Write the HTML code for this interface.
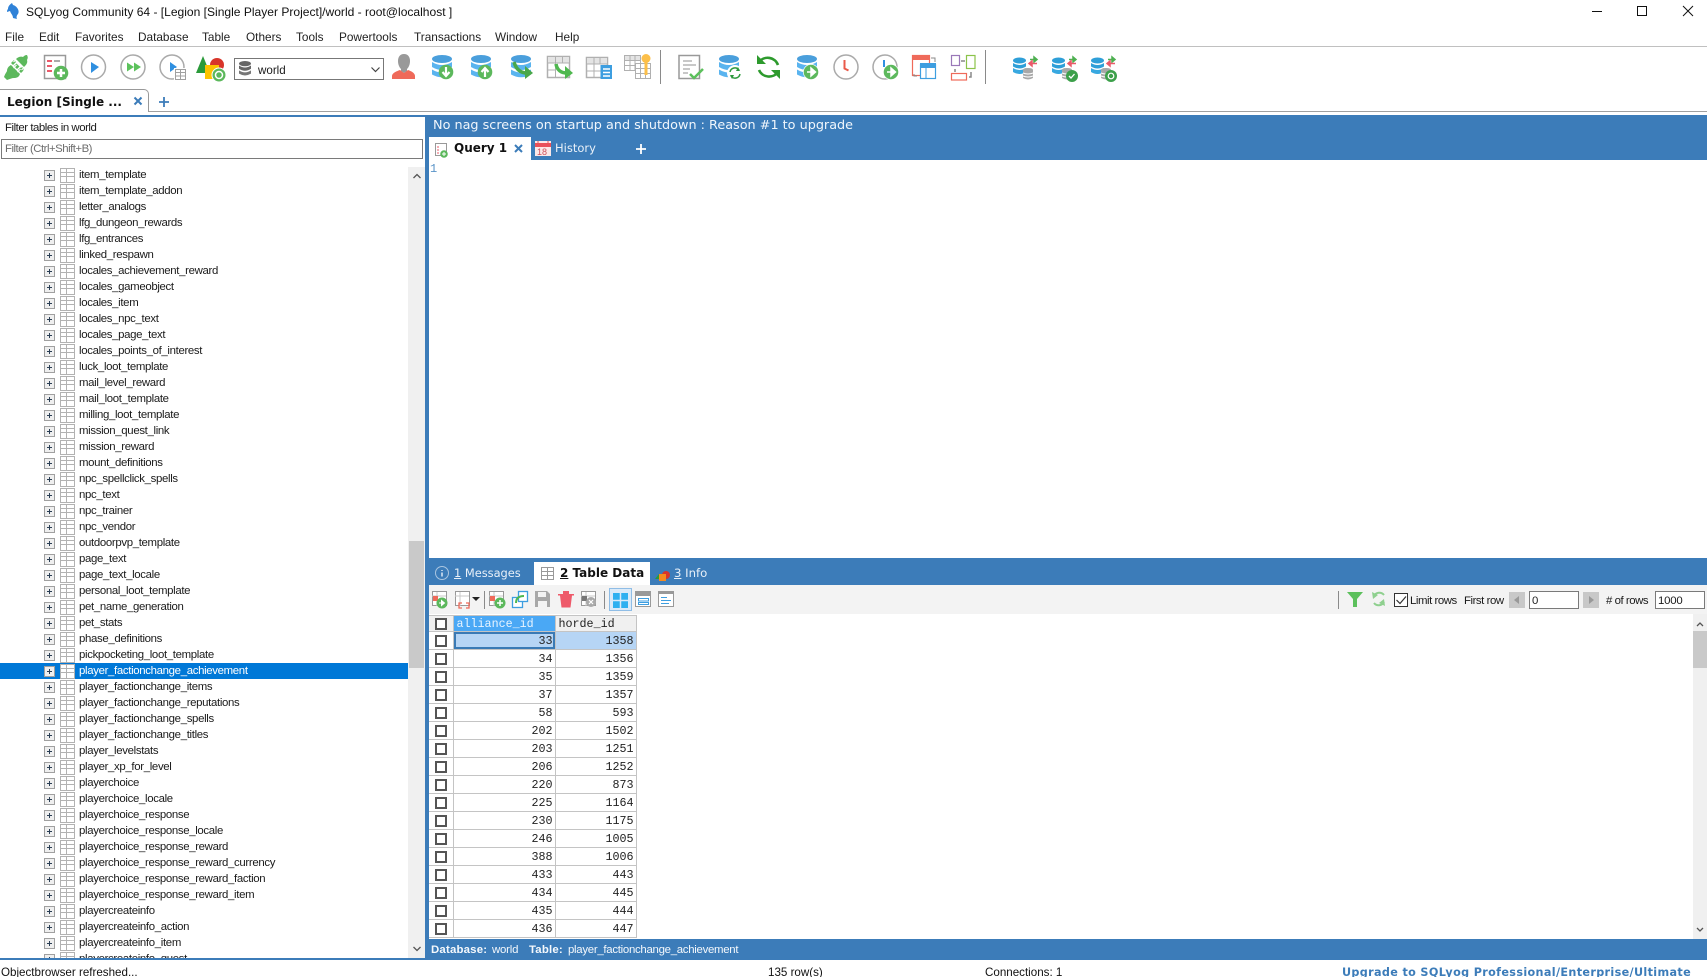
<!DOCTYPE html>
<html><head><meta charset="utf-8"><title>SQLyog</title>
<style>
*{box-sizing:border-box}
html,body{margin:0;padding:0;background:#fff;width:1707px;height:977px;overflow:hidden}
body{position:relative;font-family:"Liberation Sans",sans-serif;font-size:11.8px;color:#1a1a1a}
.a{position:absolute;white-space:nowrap;line-height:16px}
.b{position:absolute}
.v{font-family:"DejaVu Sans",sans-serif}
.n{font-size:11.4px;letter-spacing:-.45px;top:593px}
#tree{position:absolute;left:0;top:167px;width:408px;height:791px;overflow:hidden}
.r{position:relative;height:16px;line-height:17px;padding-left:79px;font-size:11.4px;letter-spacing:-.33px;white-space:nowrap;color:#1a1a1a}
.r:before{content:"";position:absolute;left:44px;top:3px;width:9px;height:9px;border:1px solid #a0a0a0;background:linear-gradient(#2b3f55,#2b3f55) center/5px 1px no-repeat,linear-gradient(#2b3f55,#2b3f55) center/1px 5px no-repeat,#efefef}
.r:after{content:"";position:absolute;left:60px;top:1px;width:13px;height:13px;border:1px solid #b2b2b2;background:linear-gradient(#b2b2b2,#b2b2b2) 0 3px/100% 1px no-repeat,linear-gradient(#b2b2b2,#b2b2b2) 0 7px/100% 1px no-repeat,linear-gradient(#b2b2b2,#b2b2b2) 5px 0/1px 100% no-repeat,#fff}
.r.s{background:#0078d7;color:#fff}
table{position:absolute;left:429px;top:615px;border-collapse:collapse;table-layout:fixed;width:207px;font-family:"Liberation Mono",monospace;font-size:11.7px}
td{height:18px;padding:1px 2px 0 0;text-align:right;border:1px solid #c4c4c4;border-left:0;line-height:14px;color:#222}
td:first-child{border-left:0;padding:0;position:relative}
td i{position:absolute;left:6px;top:3px;width:12px;height:12px;border:2px solid #555;background:#fff}
tr.h td{height:16px;background:#f0f0f0;text-align:left;padding:0 0 0 3px}
tr.h td.c{background:#4aa8f5;color:#e8f4ff}
tr.h td:first-child{background:#f0f0f0;padding:0}
tr.h td i{top:2px}
td.sel{background:#b6d5f5;box-shadow:inset 0 0 0 2px #3a7ab5}
td.sl{background:#b6d5f5}
.sb{position:absolute;background:#f0f0f0}
.th{position:absolute;background:#c9c9c9}
</style></head><body>

<!-- blue areas -->
<div class="b" style="left:0;top:115px;width:1707px;height:2px;background:#3c7cb9"></div>
<div class="b" style="left:425px;top:115px;width:1282px;height:45px;background:#3c7cb9"></div>
<div class="b" style="left:425px;top:115px;width:4px;height:845px;background:#3c7cb9"></div>
<div class="b" style="left:425px;top:558px;width:1282px;height:27px;background:#3c7cb9"></div>
<div class="b" style="left:429px;top:585px;width:1278px;height:29px;background:#f3f3f3"></div>
<div class="b" style="left:425px;top:939px;width:1282px;height:21px;background:#3c7cb9"></div>
<div class="b" style="left:0;top:958px;width:1707px;height:2px;background:#3c7cb9"></div>
<div class="b" style="left:0;top:46px;width:1707px;height:1px;background:#c0c0c0"></div>
<div class="b" style="left:0;top:111px;width:1707px;height:1px;background:#a0a0a0"></div>

<!-- title -->
<div class="a" style="left:26px;top:4px;font-size:12.05px;color:#111">SQLyog Community 64 - [Legion [Single Player Project]/world - root@localhost ]</div>

<!-- menu -->
<div class="a" style="left:5px;top:29px;color:#222">File</div>
<div class="a" style="left:39px;top:29px;color:#222">Edit</div>
<div class="a" style="left:75px;top:29px;color:#222">Favorites</div>
<div class="a" style="left:138px;top:29px;color:#222">Database</div>
<div class="a" style="left:202px;top:29px;color:#222">Table</div>
<div class="a" style="left:246px;top:29px;color:#222">Others</div>
<div class="a" style="left:296px;top:29px;color:#222">Tools</div>
<div class="a" style="left:339px;top:29px;color:#222">Powertools</div>
<div class="a" style="left:414px;top:29px;color:#222">Transactions</div>
<div class="a" style="left:495px;top:29px;color:#222">Window</div>
<div class="a" style="left:555px;top:29px;color:#222">Help</div>

<!-- combo -->
<div class="b" style="left:234px;top:58px;width:150px;height:22px;border:1px solid #777;background:#fff"></div>
<div class="a" style="left:258px;top:63px;font-size:11.6px">world</div>

<!-- connection tab -->
<div class="b" style="left:-2px;top:89px;width:151px;height:23px;border:1px solid #999;border-bottom:0;border-top-right-radius:5px;background:#fff"></div>
<div class="a v" style="left:7px;top:94px;font-size:12px;font-weight:bold;color:#111">Legion [Single ...</div>

<!-- left filter -->
<div class="a" style="left:5px;top:120px;font-size:11.4px;letter-spacing:-.45px">Filter tables in world</div>
<div class="b" style="left:1px;top:139px;width:422px;height:20px;border:1px solid #7a7a7a;background:#fff"></div>
<div class="a" style="left:5px;top:141px;font-size:11.4px;letter-spacing:-.5px;color:#6d6d6d">Filter (Ctrl+Shift+B)</div>

<!-- tree -->
<div id="tree">
<div class="r">item_template</div>
<div class="r">item_template_addon</div>
<div class="r">letter_analogs</div>
<div class="r">lfg_dungeon_rewards</div>
<div class="r">lfg_entrances</div>
<div class="r">linked_respawn</div>
<div class="r">locales_achievement_reward</div>
<div class="r">locales_gameobject</div>
<div class="r">locales_item</div>
<div class="r">locales_npc_text</div>
<div class="r">locales_page_text</div>
<div class="r">locales_points_of_interest</div>
<div class="r">luck_loot_template</div>
<div class="r">mail_level_reward</div>
<div class="r">mail_loot_template</div>
<div class="r">milling_loot_template</div>
<div class="r">mission_quest_link</div>
<div class="r">mission_reward</div>
<div class="r">mount_definitions</div>
<div class="r">npc_spellclick_spells</div>
<div class="r">npc_text</div>
<div class="r">npc_trainer</div>
<div class="r">npc_vendor</div>
<div class="r">outdoorpvp_template</div>
<div class="r">page_text</div>
<div class="r">page_text_locale</div>
<div class="r">personal_loot_template</div>
<div class="r">pet_name_generation</div>
<div class="r">pet_stats</div>
<div class="r">phase_definitions</div>
<div class="r">pickpocketing_loot_template</div>
<div class="r s">player_factionchange_achievement</div>
<div class="r">player_factionchange_items</div>
<div class="r">player_factionchange_reputations</div>
<div class="r">player_factionchange_spells</div>
<div class="r">player_factionchange_titles</div>
<div class="r">player_levelstats</div>
<div class="r">player_xp_for_level</div>
<div class="r">playerchoice</div>
<div class="r">playerchoice_locale</div>
<div class="r">playerchoice_response</div>
<div class="r">playerchoice_response_locale</div>
<div class="r">playerchoice_response_reward</div>
<div class="r">playerchoice_response_reward_currency</div>
<div class="r">playerchoice_response_reward_faction</div>
<div class="r">playerchoice_response_reward_item</div>
<div class="r">playercreateinfo</div>
<div class="r">playercreateinfo_action</div>
<div class="r">playercreateinfo_item</div>
<div class="r">playercreateinfo_quest</div>
</div>
<div class="sb" style="left:408px;top:167px;width:17px;height:791px"></div>
<div class="th" style="left:409px;top:541px;width:15px;height:127px"></div>

<!-- right banner -->
<div class="a v" style="left:433px;top:116px;font-size:12.8px;line-height:20px;color:#f0f6fc">No nag screens on startup and shutdown : Reason #1 to upgrade</div>
<div class="b" style="left:429px;top:137px;width:102px;height:23px;background:#fff"></div>
<div class="a v" style="left:454px;top:140px;font-size:12px;font-weight:bold;color:#111">Query 1</div>
<div class="a v" style="left:555px;top:140px;font-size:11.5px;color:#e8f0f8">History</div>
<div class="a" style="left:430px;top:161px;font-family:'Liberation Mono',monospace;font-size:12px;color:#5a94c8">1</div>

<!-- result tabs -->
<div class="b" style="left:534px;top:562px;width:116px;height:23px;background:#fff"></div>
<div class="a v" style="left:454px;top:565px;font-size:11.4px;color:#e8f0f8"><u>1</u> Messages</div>
<div class="a v" style="left:560px;top:565px;font-size:12px;font-weight:bold;color:#111"><u>2</u> Table Data</div>
<div class="a v" style="left:674px;top:565px;font-size:11.7px;color:#e8f0f8"><u>3</u> Info</div>

<!-- grid toolbar right -->
<div class="b" style="left:1394px;top:593px;width:14px;height:14px;border:1px solid #333;background:#fff"></div>
<div class="a n" style="left:1410px">Limit rows</div>
<div class="a n" style="left:1464px">First row</div>
<div class="b" style="left:1509px;top:592px;width:16px;height:16px;background:#c8c8c8"></div>
<div class="b" style="left:1529px;top:591px;width:50px;height:18px;border:1px solid #7a7a7a;background:#fff"></div>
<div class="a" style="left:1532px;top:593px;font-size:11.4px;color:#222">0</div>
<div class="b" style="left:1583px;top:592px;width:16px;height:16px;background:#c8c8c8"></div>
<div class="a n" style="left:1606px"># of rows</div>
<div class="b" style="left:1655px;top:591px;width:50px;height:18px;border:1px solid #7a7a7a;background:#fff"></div>
<div class="a" style="left:1658px;top:593px;font-size:11.4px;letter-spacing:-.2px">1000</div>

<!-- grid -->
<table><colgroup><col style="width:24px"><col style="width:102px"><col style="width:81px"></colgroup>
<tr class="h"><td><i></i></td><td class="c">alliance_id</td><td>horde_id</td></tr>
<tr><td><i></i></td><td class="sel">33</td><td class="sl">1358</td></tr>
<tr><td><i></i></td><td>34</td><td>1356</td></tr>
<tr><td><i></i></td><td>35</td><td>1359</td></tr>
<tr><td><i></i></td><td>37</td><td>1357</td></tr>
<tr><td><i></i></td><td>58</td><td>593</td></tr>
<tr><td><i></i></td><td>202</td><td>1502</td></tr>
<tr><td><i></i></td><td>203</td><td>1251</td></tr>
<tr><td><i></i></td><td>206</td><td>1252</td></tr>
<tr><td><i></i></td><td>220</td><td>873</td></tr>
<tr><td><i></i></td><td>225</td><td>1164</td></tr>
<tr><td><i></i></td><td>230</td><td>1175</td></tr>
<tr><td><i></i></td><td>246</td><td>1005</td></tr>
<tr><td><i></i></td><td>388</td><td>1006</td></tr>
<tr><td><i></i></td><td>433</td><td>443</td></tr>
<tr><td><i></i></td><td>434</td><td>445</td></tr>
<tr><td><i></i></td><td>435</td><td>444</td></tr>
<tr><td><i></i></td><td>436</td><td>447</td></tr>
</table>
<div class="sb" style="left:1693px;top:614px;width:14px;height:325px"></div>
<div class="th" style="left:1693px;top:631px;width:14px;height:37px"></div>

<!-- bottom info bar -->
<div class="a" style="left:431px;top:942px;font-size:11.4px;color:#f4f8fc;font-weight:bold;letter-spacing:.2px">Database:</div>
<div class="a" style="left:492px;top:942px;font-size:11.4px;color:#f4f8fc;letter-spacing:-.2px">world</div>
<div class="a" style="left:529px;top:942px;font-size:11.4px;color:#f4f8fc;font-weight:bold;letter-spacing:.2px">Table:</div>
<div class="a" style="left:568px;top:942px;font-size:11.4px;color:#f4f8fc;letter-spacing:-.28px">player_factionchange_achievement</div>

<!-- status -->
<div class="a" style="left:1px;top:965px;font-size:11.6px;color:#111">Objectbrowser refreshed...</div>
<div class="a" style="left:768px;top:965px;font-size:11.6px;color:#111">135 row(s)</div>
<div class="a" style="left:985px;top:965px;font-size:11.6px;color:#111">Connections: 1</div>
<div class="a v" style="left:1342px;top:965px;font-size:11.2px;font-weight:bold;letter-spacing:.35px;color:#3c7cb9">Upgrade to SQLyog Professional/Enterprise/Ultimate</div>

<!-- all icons -->
<svg class="b" style="left:0;top:0" width="1707" height="977" viewBox="0 0 1707 977" fill="none">
<defs>
<g id="db"><ellipse cx="10" cy="4" rx="10" ry="4" fill="#4a9fdc"/><path d="M0 7q10 6 20 0v5q-10 6-20 0z" fill="#5ab4ef"/><path d="M0 14.500q10 6 20 0v5q-10 5.500-20 0z" fill="#5ab4ef"/></g>
<g id="tbl"><rect x=".5" y=".5" width="10" height="10" fill="#fff" stroke="#a0a0a0"/><path d="M.5 3.500h10M.5 7h10M5.500.5v10" stroke="#a0a0a0"/></g>
<g id="gr"><circle r="7.300" fill="#5cb85c"/></g>
<g id="st"><ellipse cx="6.500" cy="3.500" rx="6.500" ry="3" fill="#2e9fd8"/><path d="M0 6q6.500 4 13 0v3.500q-6.500 4-13 0z" fill="#2e9fd8"/><path d="M0 11q6.500 4 13 0v4q-6.500 4-13 0z" fill="#38a8e0"/><path d="M10 13q0-2 5-2t5 2v8q-5 3-10 0z" fill="#a8a8a8"/><path d="M10 16q5 2 10 0M10 19q5 2 10 0" stroke="#fff"/><path d="M17 2.500h7M21 0l3 2.500-3 2.500z" stroke="#4cb050" fill="#4cb050" stroke-width="1.500"/><path d="M24 6.500h-7M19 4l-3 2.500 3 2.500z" stroke="#ea5a6a" fill="#ea5a6a" stroke-width="1.500"/></g>
</defs>

<!-- title icon -->
<path d="M12 3c-3 2-4 4-4 6-1 1-1 2-1 3l3-1c1 3 3 4 3 7l4 1c-1-2 0-4 1-5 2-3-1-8-5-9l-1-2z" fill="#2f82d8"/>
<!-- window controls -->
<path d="M1592 11.500h10" stroke="#111"/><rect x="1637.500" y="6.500" width="9" height="9" stroke="#111"/><path d="M1683 6l10 10M1693 6l-10 10" stroke="#111"/>

<!-- connect plug -->
<g fill="#5cb85c"><path d="M4 77c1-3 2-4 3-6 0-3 2-5 4-6l9 9c-1 3-3 4-6 4-2 0-4 1-7 2l-3-3z"/><path d="M14 66l2.500-2.500 3 3L17 69zM18 70l2.500-2.500 3 3L21 73z"/><path d="M27 55c1 2 1 3 0 5 1 3-1 5-3 7l-8-8c2-2 5-3 7-2 1-1 2-2 4-2z"/><path d="M11 63l3-3 2 2-3 3zM19 70l3-3 2 2-3 3z"/></g>
<path d="M13.500 68l3-3M17.500 72l3-3M16 59.500l-2.500 2.500M24 67.500l-2.500 2.500" stroke="#fff" stroke-width="1.200"/>
<!-- new query -->
<rect x="44.500" y="55.500" width="21" height="23" fill="#fff" stroke="#999" stroke-width="1.500"/><path d="M47 61h5M47 66h5M47 71h5" stroke="#ea5a6a" stroke-width="2"/><path d="M54 61h6" stroke="#aaa" stroke-width="2"/><use href="#gr" x="61" y="73"/><path d="M61 69v8M57 73h8" stroke="#fff" stroke-width="2.500"/>
<!-- play -->
<circle cx="93.500" cy="67" r="12" fill="#fff" stroke="#aaa" stroke-width="1.500"/><path d="M91 62l8 5-8 6z" fill="#2f8fe0"/>
<circle cx="133" cy="67" r="12" fill="#fff" stroke="#aaa" stroke-width="1.500"/><path d="M127 62.500l7 4.500-7 4.500zM134 62.500l7 4.500-7 4.500z" fill="#5cc25c"/>
<circle cx="172" cy="67" r="12" fill="#fff" stroke="#aaa" stroke-width="1.500"/><path d="M170 62l7 5-7 5z" fill="#2f8fe0"/><rect x="174" y="68" width="12" height="12" fill="#fff"/><use href="#tbl" x="175" y="69"/>
<!-- shapes -->
<path d="M196 73l7-17 7 17z" fill="#2a9a3a"/><circle cx="217" cy="65" r="7" fill="#d8352a"/><rect x="205" y="65" width="14" height="14" fill="#fdc400"/><circle cx="219" cy="75" r="7" fill="#5cb85c" stroke="#fff"/><circle cx="219" cy="75" r="3.500" stroke="#fff" stroke-width="1.500"/>
<!-- combo icon & arrow -->
<g transform="translate(239 61) scale(.6 .65)"><ellipse cx="10" cy="4" rx="10" ry="4" fill="#666"/><path d="M0 7q10 6 20 0v5q-10 6-20 0z" fill="#666"/><path d="M0 14.500q10 6 20 0v5q-10 5.500-20 0z" fill="#777"/></g>
<path d="M371.500 67.500l4 4 4-4" stroke="#444" stroke-width="1.200"/>
<!-- user -->
<path d="M404 54c4 0 6 3 6 7 0 3-1 6-3 8v2l-3 2-3-2v-2c-2-2-3-5-3-8 0-4 2-7 6-7z" fill="#999"/><path d="M392 79v-3c0-3 5-5 8-6l4 3 4-3c3 1 7 3 7 6v3z" fill="#ef6a5a"/>
<!-- db group -->
<use href="#db" x="432" y="55"/><use href="#gr" x="446" y="72"/><path d="M446 67v8M442.500 72l3.500 4 3.500-4" stroke="#fff" stroke-width="2.200"/>
<use href="#db" x="471" y="55"/><use href="#gr" x="485" y="72"/><path d="M485 77v-8M481.500 72l3.500-4 3.500 4" stroke="#fff" stroke-width="2.200"/>
<use href="#db" x="511" y="55"/><path d="M514 62c2 7 6 11 13 11" stroke="#4aa84a" stroke-width="3.500"/><path d="M525 66l8 7-8 6z" fill="#4aa84a"/>
<!-- table arrow -->
<rect x="547.500" y="56.500" width="22" height="21" fill="#fff" stroke="#b0b0b0" stroke-width="1.500"/><rect x="548" y="57" width="21" height="6" fill="#e4e4e4"/><path d="M548 63h21M548 70h8M555.500 57v20M562.500 57v6" stroke="#b0b0b0"/><path d="M556 64c1 6 5 9 11 9" stroke="#4fb84f" stroke-width="3.500"/><path d="M565 66l8 7-8 6z" fill="#4fb84f"/>
<!-- table struct -->
<rect x="586.500" y="57.500" width="21" height="20" fill="#fff" stroke="#b0b0b0" stroke-width="1.500"/><rect x="587" y="58" width="20" height="6" fill="#e4e4e4"/><path d="M587 64h20M587 71h14M594 58v20M600 58v6" stroke="#b0b0b0"/><rect x="600.500" y="65" width="11.500" height="14" fill="#3d9ee0"/><path d="M603 69h7M603 72.500h7M603 76h7" stroke="#fff" stroke-width="1.600"/>
<!-- key tables -->
<rect x="624.500" y="55.500" width="16" height="15" fill="#fff" stroke="#b0b0b0"/><rect x="625" y="56" width="15" height="4" fill="#e4e4e4"/><path d="M624 60.500h16M624 65.500h11M630 55v15M635 55v15" stroke="#b0b0b0"/><rect x="635.500" y="63.500" width="15" height="15" fill="#fff" stroke="#b0b0b0"/><path d="M635 68.500h15M635 73.500h15M640.500 63v15M645.500 68v10" stroke="#b0b0b0"/><circle cx="646" cy="58.500" r="4.500" fill="#fcbf49"/><path d="M646 60v15" stroke="#fcbf49" stroke-width="3"/>
<path d="M660.500 50v34M985.500 50v34" stroke="#8a8a8a"/>
<!-- doc check -->
<rect x="679" y="55.500" width="20.500" height="23" fill="#fff" stroke="#999" stroke-width="1.500"/><path d="M683 61h9M683 65h13M683 69h7M683 73h5" stroke="#c8c8c8" stroke-width="2"/><path d="M690 74l4 4 9-9" stroke="#5cc05c" stroke-width="2.500"/>
<!-- db sync -->
<use href="#db" x="719" y="55"/><circle cx="735" cy="73" r="8" fill="#fff"/><path d="M730 72a5 5 0 0 1 9-2M740 74a5 5 0 0 1-9 2" stroke="#2d9a3d" stroke-width="1.500"/><path d="M738 67l2 4h-4zM732 79l-2-4h4z" fill="#2d9a3d"/>
<!-- refresh -->
<path d="M759 62a11 11 0 0 1 19 3M778 72a11 11 0 0 1-19-2" stroke="#2d9a2d" stroke-width="2.600"/><path d="M757 55v9h9zM780 79v-9h-9z" fill="#2d9a2d"/>
<!-- db go -->
<use href="#db" x="797" y="55"/><circle cx="811" cy="72" r="8" fill="#fff"/><use href="#gr" x="811" y="72"/><path d="M807 72h5M811 68l4.500 4-4.500 4z" fill="#fff" stroke="#fff" stroke-width="1.500"/>
<!-- clocks -->
<circle cx="846" cy="67" r="12" fill="#fff" stroke="#aaa" stroke-width="1.500"/><path d="M844.500 60v8.500l4 2" stroke="#ea5a4a" stroke-width="2"/>
<circle cx="885" cy="67" r="12" fill="#fff" stroke="#aaa" stroke-width="1.500"/><path d="M884 60v7" stroke="#2f8fe0" stroke-width="2"/><circle cx="891" cy="72" r="8" fill="#fff"/><use href="#gr" x="891" y="72"/><path d="M887 72h5M891 68l4.500 4-4.500 4z" fill="#fff" stroke="#fff" stroke-width="1.500"/>
<!-- tables -->
<rect x="912.500" y="55.500" width="17" height="20" fill="#fff" stroke="#ef6a5a" stroke-width="1.200"/><rect x="912" y="55" width="18" height="5" fill="#ef6a5a"/><path d="M931 58h4v4" stroke="#888"/><rect x="920.500" y="64.500" width="15" height="14" fill="#fff" stroke="#3d9ee0" stroke-width="1.200"/><rect x="920" y="63" width="16" height="5" fill="#3d9ee0"/><path d="M926 68v10" stroke="#3d9ee0"/><path d="M917 76h-3v-2" stroke="#888"/>
<!-- schema -->
<rect x="951.500" y="55.500" width="8" height="10" stroke="#9a78b8" stroke-width="1.200"/><rect x="966.500" y="55.500" width="8.500" height="13" stroke="#8bc34a" stroke-width="1.200"/><rect x="951.500" y="73.500" width="15" height="6.500" stroke="#ef6a5a" stroke-width="1.200"/><path d="M961 61h4M955 69v3M971 72v5h-2" stroke="#888" stroke-width="1.500"/>
<!-- sync trio -->
<use href="#st" x="1013" y="57"/><use href="#st" x="1052" y="57"/><circle cx="1072" cy="76" r="6" fill="#3ca04a"/><path d="M1069 76l2 2 3.500-4" stroke="#fff" stroke-width="1.300"/><use href="#st" x="1091" y="57"/><circle cx="1111" cy="76" r="6" fill="#3ca04a"/><circle cx="1111" cy="76" r="2.800" stroke="#fff" stroke-width="1.200"/>

<!-- connection tab marks -->
<path d="M134.500 97.500l7 7M141.500 97.500l-7 7" stroke="#3c7cb9" stroke-width="2"/><path d="M164 97v10M159 102h10" stroke="#3c7cb9" stroke-width="1.800"/>

<!-- tree scroll chevrons -->
<path d="M413.500 178l3.500-3.500 3.500 3.500M413.500 947l3.500 3.500 3.500-3.500" stroke="#555" stroke-width="1.300"/>

<!-- query tab icons -->
<rect x="435.500" y="143.500" width="11" height="12" fill="#fff" stroke="#999"/><path d="M437 147h2M437 150h2M437 153h2" stroke="#ea5a6a"/><circle cx="444" cy="154" r="3.800" fill="#5cb85c"/><path d="M444 152v4M442 154h4" stroke="#fff"/>
<path d="M515 145l7 7M522 145l-7 7" stroke="#3c7cb9" stroke-width="2"/>
<rect x="535" y="141" width="16" height="15" fill="#fbe8e8"/><rect x="535" y="143" width="16" height="4" fill="#e8505a"/><path d="M538 141v3M548 141v3" stroke="#e8505a"/><text x="537" y="155" font-family="Liberation Sans,sans-serif" font-size="9" fill="#d0505a">18</text>
<path d="M641 144v10M636 149h10" stroke="#fff" stroke-width="1.800"/>

<!-- messages icon -->
<circle cx="442" cy="573" r="6.500" stroke="#a9c5e0"/><path d="M442 570v1M442 572.500v4" stroke="#dbe8f4" stroke-width="1.500"/>
<!-- table data icon -->
<rect x="541.500" y="567.500" width="12" height="12" stroke="#999"/><path d="M541 571.500h13M541 575.500h13M547.500 567v13" stroke="#999"/>
<!-- info icon -->
<path d="M655 579l4-5 4 5z" fill="#2a9a3a"/><circle cx="666" cy="575" r="4" fill="#d8352a"/><rect x="659" y="574" width="7" height="7" fill="#f58a1f"/>

<!-- grid toolbar left -->
<g stroke="#999" fill="#fff"><rect x="432.500" y="591.500" width="14" height="14"/><rect x="455.500" y="591.500" width="14" height="14"/><rect x="489.500" y="591.500" width="14" height="14"/></g>
<path d="M432 596h14M437 592v14M455 596h14M460 592v14M489 596h14M494 592v14" stroke="#c8c8c8"/>
<rect x="433" y="596" width="5" height="5" fill="#ef6a5a"/><rect x="490" y="596" width="5" height="5" fill="#ef6a5a"/>
<circle cx="442" cy="603" r="5.500" fill="#5cb85c"/><path d="M439 603h3M441.500 600.500l3 2.500-3 2.500z" fill="#fff" stroke="#fff"/>
<path d="M462 603h-3v5h3M466 603h3v5h-3" stroke="#ef6a5a" stroke-width="1.300"/><path d="M472 597h8l-4 4z" fill="#222"/>
<path d="M484.500 591v18M604.500 591v18M1338.500 591v18" stroke="#8a8a8a"/>
<circle cx="500" cy="603" r="5.500" fill="#5cb85c"/><path d="M497 603h6M500 600v6" stroke="#fff" stroke-width="1.500"/>
<rect x="512.500" y="597.500" width="10" height="10" fill="#fff" stroke="#3d9ee0" stroke-width="1.300"/><rect x="518.500" y="591.500" width="9" height="10" fill="#fff" stroke="#3d9ee0" stroke-width="1.300"/><path d="M516 603c0-5 3-7 8-7" stroke="#4fb84f" stroke-width="2"/>
<path d="M535 591h12l3 3v13h-15z" fill="#a8a8a8"/><rect x="538" y="592" width="8" height="5" fill="#f3f3f3"/><rect x="538" y="601" width="9" height="6" fill="#f3f3f3"/>
<path d="M558 594h16v1.500h-2l-1.500 12h-9l-1.500-12h-2zM563 591h6v3h-6z" fill="#ee5a6a"/>
<rect x="581.500" y="591.500" width="14" height="14" fill="#fff" stroke="#999"/><path d="M581 596h14M586 592v14" stroke="#c8c8c8"/><rect x="582" y="596" width="5" height="5" fill="#777"/><circle cx="591" cy="602" r="5" fill="#aaa"/><path d="M589 600l4 4M593 600l-4 4" stroke="#fff" stroke-width="1.200"/>
<rect x="609.500" y="588.500" width="22" height="22" fill="#dbeaf8" stroke="#8fbde6"/><path d="M613 593h15v15h-15z" fill="#2fb0f0"/><path d="M620.500 593v15M613 600.500h15" stroke="#dbeaf8" stroke-width="1.500"/>
<rect x="635.500" y="591.500" width="15" height="15" fill="#fff" stroke="#999"/><rect x="635" y="591" width="16" height="5" fill="#999"/><rect x="638.500" y="598.500" width="10" height="2.500" stroke="#3d9ee0"/><rect x="638.500" y="602.500" width="10" height="2" stroke="#3d9ee0"/>
<rect x="658.500" y="591.500" width="15" height="15" fill="#fff" stroke="#999"/><rect x="658" y="591" width="16" height="3" fill="#999"/><path d="M661 597.500h6M661 600.500h10M661 603.500h8" stroke="#3d9ee0"/>

<!-- grid toolbar right -->
<path d="M1347 592h16l-6 7v8h-4v-8z" fill="#5cc05c"/><path d="M1374 596a6 6 0 0 1 10-1M1384 602a6 6 0 0 1-10 1" stroke="#8fd08f" stroke-width="2"/><path d="M1372 592l1 7 5-4zM1385 606l-1-7-5 4z" fill="#8fd08f"/>
<path d="M1396.500 600l3.500 3.500 6-7" stroke="#333" stroke-width="1.200"/>
<path d="M1519 596l-5 4 5 4z" fill="#999"/><path d="M1589 596l5 4-5 4z" fill="#999"/>

<!-- grid scroll chevrons -->
<path d="M1697 626l3-3 3 3M1697 928l3 3 3-3" stroke="#555" stroke-width="1.300"/>
</svg>
</body></html>
